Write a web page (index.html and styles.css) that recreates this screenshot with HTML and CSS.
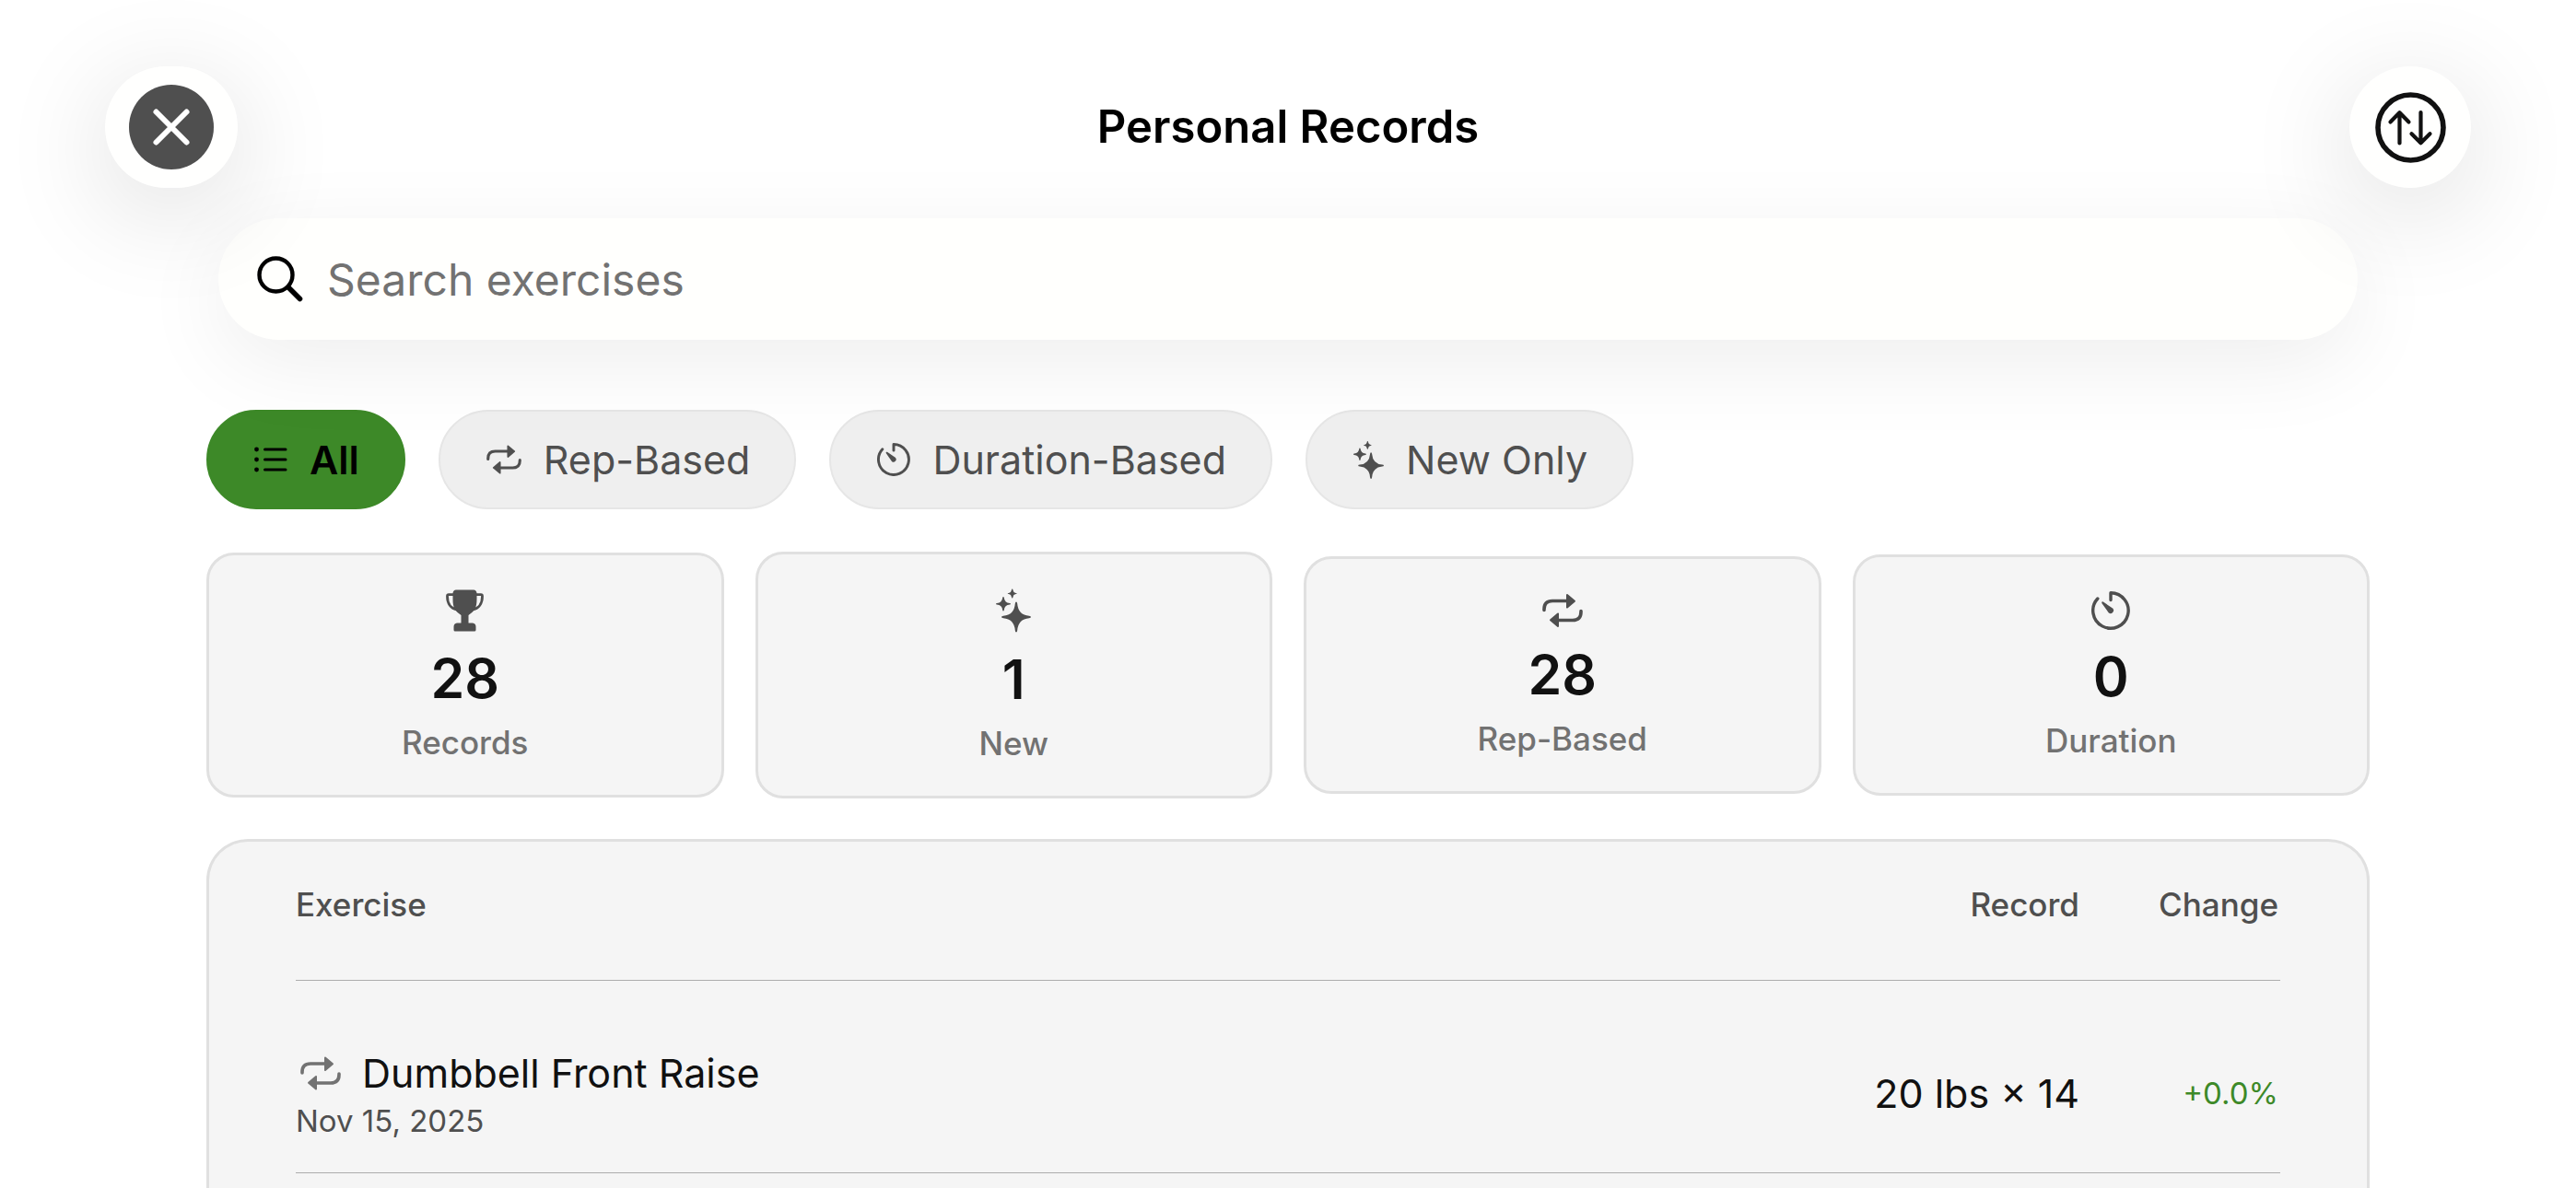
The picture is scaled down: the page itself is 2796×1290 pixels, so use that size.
FILE: index.html
```html
<!DOCTYPE html>
<html lang="en">
<head>
  <meta charset="UTF-8">
  <meta name="viewport" content="width=device-width, initial-scale=1.0">
  <title>Personal Records</title>
  <link rel="stylesheet" href="styles.css">
</head>
<body>
  <!-- Shared icons -->
  <svg class="icon-defs" aria-hidden="true">
    <symbol id="icon-repeat" viewBox="0 0 44 37">
      <path d="M2 18V17Q2 8 11 8H28M42 19V20Q42 29 33 29H16" fill="none" stroke="currentColor" stroke-width="3.6" stroke-linecap="round"/>
      <path d="M27 1.5L35 8.2L27 15ZM17 35.5L9 28.8L17 22Z" fill="currentColor" stroke="currentColor" stroke-width="2" stroke-linejoin="round"/>
    </symbol>
    <symbol id="icon-timer" viewBox="0 0 42 42">
      <path d="M21 9.5V1.8A19.2 19.2 0 1 1 6.8 8" fill="none" stroke="currentColor" stroke-width="3.4" stroke-linecap="round" stroke-linejoin="round"/>
      <path d="M11.3 12.9Q10.8 11 12.8 11.4L23 18.5A3.2 3.2 0 0 1 18.6 23.2Z" fill="currentColor"/>
    </symbol>
    <symbol id="icon-sparkles" viewBox="0 0 38 47">
      <path d="M22 14Q23 14 23.2 16Q24.2 28.3 36 29.3Q38 29.5 38 30.5Q38 31.5 36 31.7Q24.2 32.7 23.2 45Q23 47 22 47Q21 47 20.8 45Q19.8 32.7 8 31.7Q6 31.5 6 30.5Q6 29.5 8 29.3Q19.8 28.3 20.8 16Q21 14 22 14Z" fill="currentColor"/>
      <path d="M8 8.5Q8.7 8.5 8.8 9.5Q9.3 15 15 15.5Q16 15.6 16 16.3Q16 17 15 17.1Q9.3 17.6 8.8 23Q8.7 24 8 24Q7.3 24 7.2 23Q6.7 17.6 1 17.1Q0 17 0 16.3Q0 15.6 1 15.5Q6.7 15 7.2 9.5Q7.3 8.5 8 8.5Z" fill="currentColor"/>
      <path d="M17.7 0Q18.4 0 18.5 1.3Q18.8 4 21.5 4.4Q22.7 4.5 22.7 5Q22.7 5.5 21.5 5.6Q18.8 6 18.5 8.7Q18.4 10 17.7 10Q17 10 16.9 8.7Q16.6 6 13.9 5.6Q12.7 5.5 12.7 5Q12.7 4.5 13.9 4.4Q16.6 4 16.9 1.3Q17 0 17.7 0Z" fill="currentColor"/>
    </symbol>
  </svg>

  <div class="screen">
    <header class="top">
      <div class="nav">
        <button class="nav-btn nav-close" type="button" aria-label="Close">
          <svg width="92" height="92" viewBox="0 0 92 92">
            <circle cx="46" cy="46" r="46" fill="#4f4f4f"/>
            <path d="M29.500 29.500L62.500 62.500M62.500 29.500L29.500 62.500" stroke="#fff" stroke-width="6" stroke-linecap="round"/>
          </svg>
        </button>
        <h1>Personal Records</h1>
        <button class="nav-btn nav-sort" type="button" aria-label="Sort">
          <svg width="77" height="77" viewBox="0 0 77 77" fill="none" stroke="#111" stroke-linecap="round" stroke-linejoin="round">
            <circle cx="38.5" cy="38.5" r="35.5" stroke-width="5.6"/>
            <path d="M26.500 55.500V22.500M16.500 32.500L26.500 22.300L36.500 32.500M49.500 22V55M39.500 45.300L49.500 55.300L59.500 45.300" stroke-width="4.2"/>
          </svg>
        </button>
      </div>
      <label class="search">
        <svg width="50" height="50" viewBox="0 0 50 50" fill="none" stroke="#000" stroke-linecap="round">
          <circle cx="20.5" cy="20.5" r="18" stroke-width="4.4"/>
          <path d="M34 34L46.500 46.500" stroke-width="5.6"/>
        </svg>
        <input type="search" placeholder="Search exercises" aria-label="Search exercises">
      </label>
    </header>

    <main>
      <div class="filters">
        <button class="chip active" type="button">
          <svg width="36" height="28" viewBox="0 0 36 28">
            <path d="M11.500 3H34M11.500 14H34M11.500 25H34" stroke="currentColor" stroke-width="3" stroke-linecap="round"/>
            <circle cx="2.5" cy="3" r="2.4"/><circle cx="2.5" cy="14" r="2.4"/><circle cx="2.5" cy="25" r="2.4"/>
          </svg>
          All
        </button>
        <button class="chip" type="button">
          <svg width="38" height="32"><use href="#icon-repeat"/></svg>
          Rep-Based
        </button>
        <button class="chip" type="button">
          <svg width="36" height="36"><use href="#icon-timer"/></svg>
          Duration-Based
        </button>
        <button class="chip" type="button">
          <svg width="33" height="41"><use href="#icon-sparkles"/></svg>
          New Only
        </button>
      </div>

      <div class="stats">
        <div class="stat">
          <svg width="43" height="48" viewBox="-1 -1.5 43 48">
            <path d="M11 0H30Q33 0 33.500 3.500V10C33.500 20 31 23 24.500 27.500V36H29Q32.500 36.500 32.500 40V43.500Q32.500 45 31 45H10Q8.500 45 8.500 43.500V40Q8.500 36.500 12 36H16.500V27.500C10 23 7.500 20 7.500 10V3.500Q8 0 11 0Z" fill="currentColor"/>
            <path d="M9 5.200H3Q1.500 5.200 1.500 7C1.500 14.500 5 20.500 12.500 21.500M32 5.200H38Q39.500 5.200 39.500 7C39.500 14.500 36 20.500 28.500 21.500" fill="none" stroke="currentColor" stroke-width="2.8"/>
          </svg>
          <strong>28</strong>
          <span>Records</span>
        </div>
        <div class="stat">
          <svg width="38" height="50"><use href="#icon-sparkles"/></svg>
          <strong>1</strong>
          <span>New</span>
        </div>
        <div class="stat">
          <svg width="44" height="40"><use href="#icon-repeat"/></svg>
          <strong>28</strong>
          <span>Rep-Based</span>
        </div>
        <div class="stat">
          <svg width="42" height="44"><use href="#icon-timer"/></svg>
          <strong>0</strong>
          <span>Duration</span>
        </div>
      </div>

      <section class="panel">
        <table>
          <thead>
            <tr>
              <th>Exercise</th>
              <th class="record">Record</th>
              <th class="change">Change</th>
            </tr>
          </thead>
          <tbody>
            <tr>
              <td>
                <div class="name">
                  <svg width="44" height="37"><use href="#icon-repeat"/></svg>
                  Dumbbell Front Raise
                </div>
                <div class="date">Nov 15, 2025</div>
              </td>
              <td class="record">20 lbs × 14</td>
              <td class="change">+0.0%</td>
            </tr>
          </tbody>
        </table>
      </section>
    </main>
  </div>
</body>
</html>
```
FILE: styles.css
```css
* {
  box-sizing: border-box;
}

body {
  margin: 0;
  background: #fff;
  color: #111;
  font-family: Inter, "Liberation Sans", sans-serif;
}

button,
input {
  font-family: inherit;
}

.icon-defs {
  display: none;
}

.screen {
  display: flex;
  flex-direction: column;
  height: 100vh;
  overflow: hidden;
}

/* Header floats over the list, so its shadow falls on the chips */
.top {
  position: relative;
  z-index: 1;
  flex: none;
  padding: 72px 114px 0;
}

.nav {
  display: grid;
  grid-template-columns: 1fr auto 1fr;
  align-items: center;
}

.nav-btn {
  display: flex;
  align-items: center;
  justify-content: center;
  height: 132px;
  padding: 0;
  border: none;
  border-radius: 66px;
  background: #fffffe;
  box-shadow: 0 24px 120px rgba(0, 0, 0, 0.14);
  cursor: pointer;
}

.nav-close {
  width: 144px;
}

.nav-sort {
  justify-self: end;
  width: 132px;
}

h1 {
  margin: 0;
  color: #000;
  font-size: 49px;
  font-weight: 600;
  line-height: 60px;
}

.search {
  display: flex;
  align-items: center;
  gap: 26px;
  height: 132px;
  margin: 33px 123px 0;
  padding: 0 42px;
  border-radius: 66px;
  background: #fffffd;
  box-shadow: 0 24px 96px rgba(0, 0, 0, 0.07);
}

.search input {
  flex: 1;
  padding: 0;
  border: none;
  outline: none;
  background: none;
  font-size: 48px;
}

.search input::placeholder {
  color: #727272;
}

main {
  display: flex;
  flex: 1;
  flex-direction: column;
  padding: 76px 224px 0;
}

.filters {
  display: flex;
  gap: 36px;
}

.chip {
  display: flex;
  align-items: center;
  gap: 24px;
  height: 108px;
  padding: 0 48px 0 50px;
  border: 2px solid #e6e6e6;
  border-radius: 54px;
  background: #efefef;
  color: #4f4f4f;
  font-size: 43px;
  cursor: pointer;
}

.chip.active {
  border-color: #3d8928;
  background: #3d8928;
  color: #000;
  font-weight: 600;
}

.stats {
  display: grid;
  grid-template-columns: repeat(4, 1fr);
  align-items: center;
  gap: 34px;
  margin: 46px 0 44px;
}

.stat {
  display: flex;
  flex-direction: column;
  align-items: center;
  padding: 36px 36px 35px;
  border: 3px solid #e0e0e0;
  border-radius: 30px;
  background: #f5f5f5;
  color: #4f4f4f;
}

.stat strong {
  margin: 14px 0 11px;
  color: #111;
  font-size: 59px;
  font-weight: 600;
  line-height: 72px;
}

.stat span {
  color: #727272;
  font-size: 35px;
  font-weight: 500;
  line-height: 44px;
}

.panel {
  flex: 1;
  padding: 0 94px;
  border: 3px solid #e0e0e0;
  border-bottom: none;
  border-radius: 45px 45px 0 0;
  background: #f5f5f5;
}

table {
  width: 100%;
  border-collapse: collapse;
}

th {
  padding: 46px 0 60px;
  border-bottom: 1px solid #adadad;
  color: #4f4f4f;
  font-size: 35px;
  font-weight: 500;
  line-height: 44px;
  text-align: left;
}

td {
  padding: 70px 0 34px;
  border-bottom: 1px solid #adadad;
  font-size: 43px;
}

.record,
.change {
  padding-right: 2px;
  text-align: right;
}

.change {
  width: 216px;
}

td.change {
  color: #3d8928;
  font-size: 33px;
}

.name {
  display: flex;
  align-items: center;
  gap: 23px;
  padding-left: 5px;
  line-height: 60px;
}

.name svg {
  color: #727272;
}

.date {
  color: #4f4f4f;
  font-size: 33px;
  line-height: 44px;
}
```
